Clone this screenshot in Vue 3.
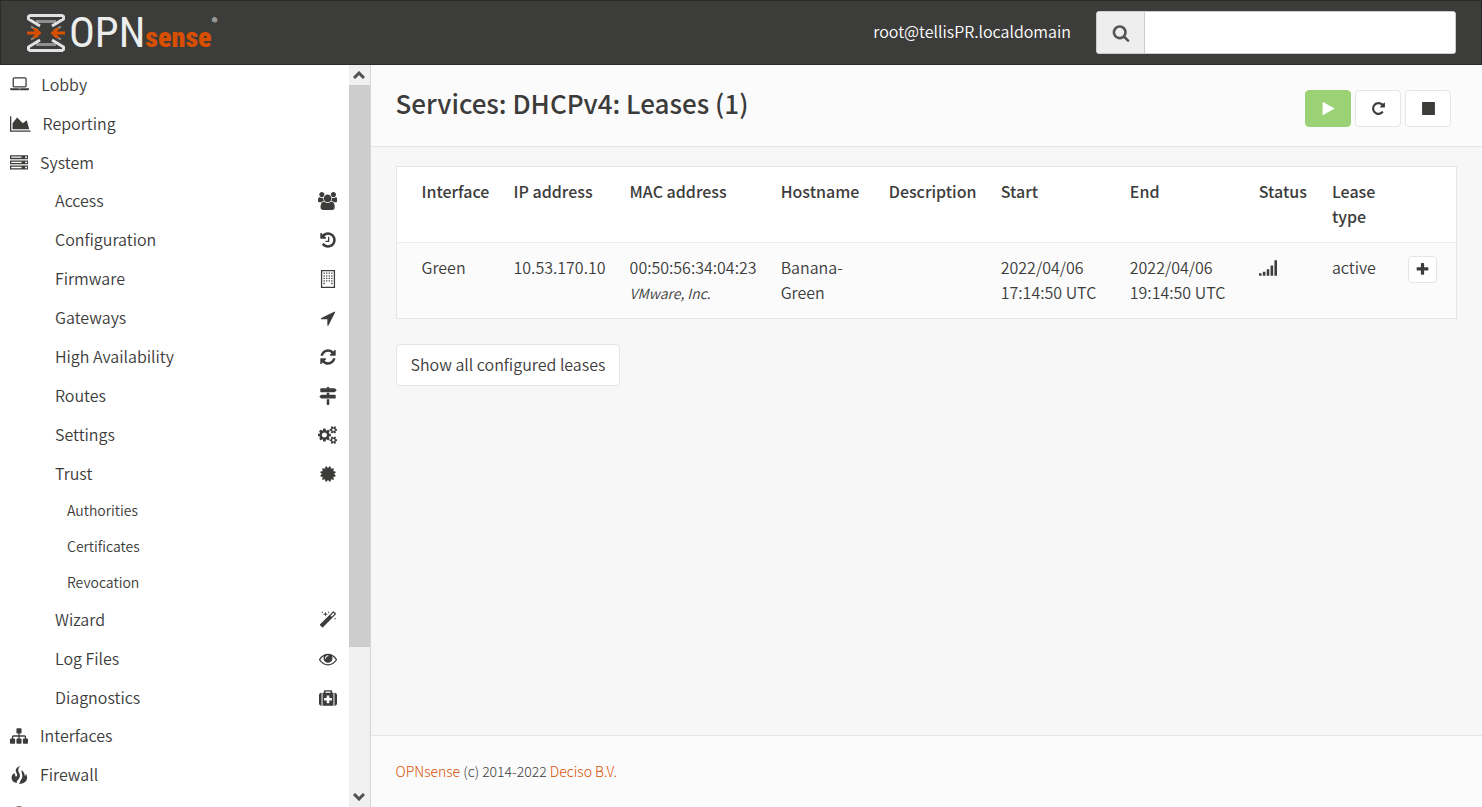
<script setup>
import { ref } from 'vue'

const search = ref('')

const icons = {
  laptop: { w: 1920, d: 'M416 1152q-66 0-113-47t-47-113v-704q0-66 47-113t113-47h1088q66 0 113 47t47 113v704q0 66-47 113t-113 47h-1088zm-32-864v704q0 13 9.500 22.500t22.500 9.500h1088q13 0 22.500-9.500t9.500-22.500v-704q0-13-9.500-22.500t-22.500-9.500h-1088q-13 0-22.500 9.500t-9.500 22.500zm1376 928h160v96q0 40-47 68t-113 28h-1600q-66 0-113-28t-47-68v-96h1760zm-720 96q16 0 16-16t-16-16h-160q-16 0-16 16t16 16h160z' },
  chart: { w: 2048, d: 'M2048 1536v128h-2048v-1536h128v1408h1920zm-384-1024l256 896h-1664v-576l448-576 576 576z' },
  server: { w: 1792, d: 'M128 1408h1024v-128h-1024v128zm0-512h1024v-128h-1024v128zm1568 448q0-40-28-68t-68-28-68 28-28 68 28 68 68 28 68-28 28-68zm-1568-960h1024v-128h-1024v128zm1568 448q0-40-28-68t-68-28-68 28-28 68 28 68 68 28 68-28 28-68zm0-512q0-40-28-68t-68-28-68 28-28 68 28 68 68 28 68-28 28-68zm96 832v384h-1792v-384h1792zm0-512v384h-1792v-384h1792zm0-512v384h-1792v-384h1792z' },
  users: { w: 1920, d: 'M593 896q-162 5-265 128h-134q-82 0-138-40.500t-56-118.500q0-353 124-353 6 0 43.500 21t97.500 42.500 119 21.500q67 0 133-23-5 37-5 66 0 139 81 256zm1071 637q0 120-73 189.500t-194 69.500h-874q-121 0-194-69.500t-73-189.500q0-53 3.500-103.500t14-109 26.500-108.500 43-97.500 62-81 85.500-53.500 111.500-20q10 0 43 21.500t73 48 107 48 135 21.500 135-21.500 107-48 73-48 43-21.500q61 0 111.500 20t85.500 53.500 62 81 43 97.500 26.500 108.500 14 109 3.500 103.500zm-1024-1277q0 106-75 181t-181 75-181-75-75-181 75-181 181-75 181 75 75 181zm704 384q0 159-112.500 271.500t-271.500 112.500-271.500-112.500-112.500-271.500 112.500-271.500 271.500-112.500 271.500 112.500 112.500 271.500zm576 225q0 78-56 118.500t-138 40.500h-134q-103-123-265-128 81-117 81-256 0-29-5-66 66 23 133 23 59 0 119-21.500t97.500-42.500 43.500-21q124 0 124 353zm-128-609q0 106-75 181t-181 75-181-75-75-181 75-181 181-75 181 75 75 181z' },
  history: { w: 1792, d: 'M1664 896q0 156-61 298t-164 245-245 164-298 61q-172 0-327-72.500t-264-204.500q-7-10-6.500-22.500t8.500-20.500l137-138q10-9 25-9 16 2 23 12 73 95 179 147t225 52q104 0 198.500-40.500t163.500-109.500 109.500-163.500 40.500-198.500-40.500-198.500-109.500-163.500-163.500-109.500-198.500-40.500q-98 0-188 35.500t-160 101.500l137 138q31 30 14 69-17 40-59 40h-448q-26 0-45-19t-19-45v-448q0-42 40-59 39-17 69 14l130 129q107-101 244.500-156.500t284.500-55.500q156 0 298 61t245 164 164 245 61 298zm-640-288v448q0 14-9 23t-23 9h-320q-14 0-23-9t-9-23v-64q0-14 9-23t23-9h224v-352q0-14 9-23t23-9h64q14 0 23 9t9 23z' },
  building: { w: 1792, d: 'M192 0h1408v1792h-1408zM320 128v1536h384v-256h384v256h384v-1536zM448 256h128v128h-128zm256 0h128v128h-128zm256 0h128v128h-128zm256 0h128v128h-128zM448 512h128v128h-128zm256 0h128v128h-128zm256 0h128v128h-128zm256 0h128v128h-128zM448 768h128v128h-128zm256 0h128v128h-128zm256 0h128v128h-128zm256 0h128v128h-128zM448 1024h128v128h-128zm256 0h128v128h-128zm256 0h128v128h-128zm256 0h128v128h-128zM448 1280h128v128h-128zm768 0h128v128h-128zM704 1408h384v256h-384z' },
  arrow: { w: 1792, d: 'M1593 349l-640 1280q-17 35-57 35-5 0-15-2-22-5-35.500-22.500t-13.500-39.500v-576h-576q-22 0-39.500-13.500t-22.500-35.500 4-42 29-30l1280-640q13-7 29-7 27 0 45 19 15 14 18.500 34.500t-6.500 39.500z' },
  refresh: { w: 1792, d: 'M1639 1056q0 5-1 7-64 268-268 434.500t-478 166.500q-146 0-282.500-55t-243.500-157l-129 129q-19 19-45 19t-45-19-19-45v-448q0-26 19-45t45-19h448q26 0 45 19t19 45-19 45l-137 137q71 66 161 102t187 36q134 0 250-65t186-179q11-17 53-117 8-23 30-23h192q13 0 22.500 9.500t9.500 22.500zm25-800v448q0 26-19 45t-45 19h-448q-26 0-45-19t-19-45 19-45l138-138q-148-137-349-137-134 0-250 65t-186 179q-11 17-53 117-8 23-30 23h-199q-13 0-22.500-9.500t-9.500-22.500v-7q65-268 270-434.500t480-166.500q146 0 284 55.500t245 156.500l130-129q19-19 45-19t45 19 19 45z' },
  signs: { w: 1792, d: 'M1745 297q10 10 10 23t-10 23l-141 141q-28 28-68 28h-1344q-26 0-45-19t-19-45v-256q0-26 19-45t45-19h576v-64q0-26 19-45t45-19h128q26 0 45 19t19 45v64h512q40 0 68 28zm-977 919h256v512q0 26-19 45t-45 19h-128q-26 0-45-19t-19-45v-512zm832-448q26 0 45 19t19 45v256q0 26-19 45t-45 19h-1344q-40 0-68-28l-141-141q-10-10-10-23t10-23l141-141q28-28 68-28h512v-192h256v192h576z' },
  cogs: { w: 1920, d: 'M896 896q0-106-75-181t-181-75-181 75-75 181 75 181 181 75 181-75 75-181zm768 512q0-52-38-90t-90-38-90 38-38 90q0 53 37.500 90.500t90.500 37.500 90.500-37.500 37.500-90.500zm0-1024q0-52-38-90t-90-38-90 38-38 90q0 53 37.500 90.500t90.500 37.500 90.500-37.500 37.500-90.500zm-384 421v185q0 10-7 19.500t-16 10.500l-155 24q-11 35-32 76 34 48 90 115 7 11 7 20 0 12-7 19-23 30-82.500 89.500t-78.500 59.500q-11 0-21-7l-115-90q-37 19-77 31-11 108-23 155-7 24-30 24h-186q-11 0-20-7.500t-10-17.500l-23-153q-34-10-75-31l-118 89q-7 7-20 7-11 0-21-8-144-133-144-160 0-9 7-19 10-14 41-53t47-61q-23-44-35-82l-152-24q-10-1-17-9.500t-7-19.500v-185q0-10 7-19.500t16-10.500l155-24q11-35 32-76-34-48-90-115-7-11-7-20 0-12 7-20 22-30 82-89t79-59q11 0 21 7l115 90q34-18 77-32 11-108 23-154 7-24 30-24h186q11 0 20 7.500t10 17.500l23 153q34 10 75 31l118-89q8-7 20-7 11 0 21 8 144 133 144 160 0 8-7 19-12 16-42 54t-45 60q23 48 34 82l152 23q10 2 17 10.500t7 19.500zm640 533v140q0 16-149 31-12 27-30 52 51 113 51 138 0 4-4 7-122 71-124 71-8 0-46-47t-52-68q-20 2-30 2t-30-2q-14 21-52 68t-46 47q-2 0-124-71-4-3-4-7 0-25 51-138-18-25-30-52-149-15-149-31v-140q0-16 149-31 13-29 30-52-51-113-51-138 0-4 4-7 4-2 35-20t59-34 30-16q8 0 46 46.500t52 67.500q20-2 30-2t30 2q51-71 92-112l6-2q4 0 124 70 4 3 4 7 0 25-51 138 17 23 30 52 149 15 149 31zm0-1024v140q0 16-149 31-12 27-30 52 51 113 51 138 0 4-4 7-122 71-124 71-8 0-46-47t-52-68q-20 2-30 2t-30-2q-14 21-52 68t-46 47q-2 0-124-71-4-3-4-7 0-25 51-138-18-25-30-52-149-15-149-31v-140q0-16 149-31 13-29 30-52-51-113-51-138 0-4 4-7 4-2 35-20t59-34 30-16q8 0 46 46.500t52 67.500q20-2 30-2t30 2q51-71 92-112l6-2q4 0 124 70 4 3 4 7 0 25-51 138 17 23 30 52 149 15 149 31z' },
  certificate: { w: 1792, d: 'M1504 896l138 135q30 28 20 70-12 41-52 51l-188 48 53 186q12 41-19 70-29 31-70 19l-186-53-48 188q-10 40-51 52-12 2-19 2-31 0-51-22l-135-138-135 138q-28 30-70 20-41-11-51-52l-48-188-186 53q-41 12-70-19-31-29-19-70l53-186-188-48q-40-10-52-51-10-42 20-70l138-135-138-135q-30-28-20-70 12-41 52-51l188-48-53-186q-12-41 19-70 29-31 70-19l186 53 48-188q10-41 51-51 41-12 70 19l135 139 135-139q29-30 70-19 41 10 51 51l48 188 186-53q41-12 70 19 31 29 19 70l-53 186 188 48q40 10 52 51 10 42-20 70z' },
  magic: { w: 1792, d: 'M1254 581l293-293-107-107-293 293zm447-293q0 27-18 45l-1286 1286q-18 18-45 18t-45-18l-198-198q-18-18-18-45t18-45l1286-1286q18-18 45-18t45 18l198 198q18 18 18 45zm-1351-190l98 30-98 30-30 98-30-98-98-30 98-30 30-98zm350 162l196 60-196 60-60 196-60-196-196-60 196-60 60-196zm930 478l98 30-98 30-30 98-30-98-98-30 98-30 30-98zm-640-640l98 30-98 30-30 98-30-98-98-30 98-30 30-98z' },
  eye: { w: 1792, d: 'M1664 960q-152-236-381-353 61 104 61 225 0 185-131.500 316.500t-316.500 131.500-316.500-131.500-131.500-316.500q0-121 61-225-229 117-381 353 133 205 333.500 326.500t434.500 121.500 434.500-121.500 333.500-326.500zm-720-384q0-20-14-34t-34-14q-125 0-214.500 89.500t-89.500 214.500q0 20 14 34t34 14 34-14 14-34q0-86 61-147t147-61q20 0 34-14t14-34zm848 384q0 34-20 69-140 230-376.500 368.500t-499.500 138.500-499.500-139-376.500-368q-20-35-20-69t20-69q140-229 376.500-368t499.500-139 499.500 139 376.500 368q20 35 20 69z' },
  medkit: { w: 1792, d: 'M1280 1120v-192q0-14-9-23t-23-9h-224v-224q0-14-9-23t-23-9h-192q-14 0-23 9t-9 23v224h-224q-14 0-23 9t-9 23v192q0 14 9 23t23 9h224v224q0 14 9 23t23 9h192q14 0 23-9t9-23v-224h224q14 0 23-9t9-23zm-640-736h512v-128h-512v128zm-384 0v1280h-32q-92 0-158-66t-66-158v-832q0-92 66-158t158-66h32zm1184 0v1280h-1088v-1280h128v-160q0-40 28-68t68-28h640q40 0 68 28t28 68v160h128zm352 224v832q0 92-66 158t-158 66h-32v-1280h32q92 0 158 66t66 158z' },
  sitemap: { w: 1792, d: 'M1792 1248v320q0 40-28 68t-68 28h-320q-40 0-68-28t-28-68v-320q0-40 28-68t68-28h96v-192h-512v192h96q40 0 68 28t28 68v320q0 40-28 68t-68 28h-320q-40 0-68-28t-28-68v-320q0-40 28-68t68-28h96v-192h-512v192h96q40 0 68 28t28 68v320q0 40-28 68t-68 28h-320q-40 0-68-28t-28-68v-320q0-40 28-68t68-28h96v-192q0-52 38-90t90-38h512v-192h-96q-40 0-68-28t-28-68v-320q0-40 28-68t68-28h320q40 0 68 28t28 68v320q0 40-28 68t-68 28h-96v192h512q52 0 90 38t38 90v192h96q40 0 68 28t28 68z' },
  fire: { w: 1792, d: 'M1000 0C620 140 500 380 620 640C720 820 740 980 640 1040C540 1070 500 960 530 860C480 860 440 800 450 700C240 820 130 1020 160 1240C190 1480 420 1680 700 1690C640 1560 700 1480 800 1360C1000 1160 1060 900 900 660C760 440 820 200 1000 0zM1160 400C1120 620 1200 760 1230 960C1260 1240 1080 1300 1040 1480C1020 1600 960 1700 880 1792C1360 1760 1680 1560 1700 1220C1710 1020 1660 880 1560 780C1580 900 1540 980 1470 1000C1480 760 1340 540 1160 400z' },
  globe: { w: 1792, d: 'M896 128a768 768 0 1 0 0 1536a768 768 0 1 0 0-1536z' },
  search: { w: 1792, d: 'M1216 832q0-185-131.500-316.500t-316.500-131.500-316.500 131.500-131.500 316.500 131.500 316.500 316.500 131.500 316.500-131.500 131.500-316.500zm512 832q0 52-38 90t-90 38q-54 0-90-38l-343-342q-179 124-399 124-143 0-273.500-55.500t-225-150-150-225-55.500-273.500 55.500-273.500 150-225 225-150 273.500-55.500 273.500 55.500 225 150 150 225 55.500 273.500q0 220-124 399l343 343q37 37 37 90z' },
  play: { w: 1792, d: 'M1576 927l-1328 738q-23 13-39.500 3t-16.500-36v-1472q0-26 16.500-36t39.500 3l1328 738q23 13 23 31t-23 31z' },
  repeat: { w: 1792, d: 'M1664 256v448q0 26-19 45t-45 19h-448q-42 0-59-40-17-39 14-69l138-138q-148-137-349-137-104 0-198.500 40.500t-163.500 109.500-109.500 163.500-40.500 198.500 40.500 198.500 109.500 163.500 163.500 109.500 198.500 40.500q119 0 225-52t179-147q7-10 23-12 15 0 25 9l137 138q9 8 9.500 20.500t-7.500 22.500q-109 132-264 204.500t-327 72.500q-156 0-298-61t-245-164-164-245-61-298 61-298 164-245 245-164 298-61q147 0 284.500 55.500t244.500 156.500l130-129q29-31 70-14 39 17 39 59z' },
  stop: { w: 1792, d: 'M1664 192v1408q0 26-19 45t-45 19h-1408q-26 0-45-19t-19-45v-1408q0-26 19-45t45-19h1408q26 0 45 19t19 45z' },
  signal: { w: 1792, d: 'M0 1408h256v256h-256zM384 1280h256v384h-256zM768 1024h256v640h-256zM1152 640h256v1024h-256zM1536 128h256v1536h-256z' },
  plus: { w: 1792, d: 'M1600 736v192q0 40-28 68t-68 28h-416v416q0 40-28 68t-68 28h-192q-40 0-68-28t-28-68v-416h-416q-40 0-68-28t-28-68v-192q0-40 28-68t68-28h416v-416q0-40 28-68t68-28h192q40 0 68 28t28 68v416h416q40 0 68 28t28 68z' }
}

const menu = [
  { name: 'Lobby', icon: 'laptop' },
  { name: 'Reporting', icon: 'chart' },
  {
    name: 'System',
    icon: 'server',
    items: [
      { name: 'Access', icon: 'users' },
      { name: 'Configuration', icon: 'history' },
      { name: 'Firmware', icon: 'building' },
      { name: 'Gateways', icon: 'arrow' },
      { name: 'High Availability', icon: 'refresh' },
      { name: 'Routes', icon: 'signs' },
      { name: 'Settings', icon: 'cogs' },
      { name: 'Trust', icon: 'certificate', items: ['Authorities', 'Certificates', 'Revocation'] },
      { name: 'Wizard', icon: 'magic' },
      { name: 'Log Files', icon: 'eye' },
      { name: 'Diagnostics', icon: 'medkit' }
    ]
  },
  { name: 'Interfaces', icon: 'sitemap' },
  { name: 'Firewall', icon: 'fire' },
  { name: '', icon: 'globe' }
]

const columns = ['Interface', 'IP address', 'MAC address', 'Hostname', 'Description', 'Start', 'End', 'Status', 'Lease type']

const leases = [
  {
    iface: 'Green',
    ip: '10.53.170.10',
    mac: '00:50:56:34:04:23',
    vendor: 'VMware, Inc.',
    hostname: 'Banana-Green',
    descr: '',
    start: '2022/04/06 17:14:50 UTC',
    end: '2022/04/06 19:14:50 UTC',
    type: 'active'
  }
]

const controls = [
  { name: 'Start', icon: 'play', cls: 'btn-success' },
  { name: 'Restart', icon: 'repeat', cls: '' },
  { name: 'Stop', icon: 'stop', cls: '' }
]

const box = (name) => `0 0 ${icons[name].w} 1792`
</script>

<template>
  <div class="page">
    <header class="navbar">
      <a href="#" class="brand">
        <svg class="brand-mark" viewBox="0 0 38 38" aria-hidden="true">
          <g fill="none" stroke-linejoin="round">
            <path d="M9 7.500h20M9 30.500h20" stroke="#8f9190" stroke-width="3" />
            <path d="M4 12.500l7 4M34 12.500l-7 4M4 25.500l7-4M34 25.500l-7-4" stroke="#8f9190" stroke-width="2" />
            <path d="M13 12L1.500 5V2.500l1.500-1h32l1.500 1V5L25 12" stroke="#dfe1e2" stroke-width="3" />
            <path d="M13 26L1.500 33v2.500l1.500 1h32l1.500-1V33L25 26" stroke="#dfe1e2" stroke-width="3" />
          </g>
          <path d="M0 17.500h8L5 14h4l5.500 5L9 24H5l3-3.500H0zM38 17.500h-8l3-3.500h-4l-5.500 5 5.500 5h4l-3-3.500h8z" fill="#d94f00" />
        </svg>
        <span class="brand-name">OPN<b>sense</b></span>
        <span class="brand-reg">®</span>
      </a>
      <div class="nav-right">
        <span class="user">root@tellisPR.localdomain</span>
        <form class="search" @submit.prevent>
          <label for="menu-search" class="search-addon" aria-label="Search">
            <svg class="icon" :viewBox="box('search')"><path :d="icons.search.d" /></svg>
          </label>
          <input id="menu-search" v-model="search" type="text" />
        </form>
      </div>
    </header>

    <div class="body">
      <aside class="sidebar">
        <nav class="menu">
          <ul>
            <li v-for="group in menu" :key="group.icon">
              <a href="#" class="item">
                <svg class="icon" :viewBox="box(group.icon)"><path fill-rule="evenodd" :d="icons[group.icon].d" /></svg>
                {{ group.name }}
              </a>
              <ul v-if="group.items" class="submenu">
                <li v-for="item in group.items" :key="item.name">
                  <a href="#" class="item subitem">
                    {{ item.name }}
                    <span class="subicon">
                      <svg class="icon" :viewBox="box(item.icon)"><path :d="icons[item.icon].d" fill-rule="evenodd" /></svg>
                    </span>
                  </a>
                  <ul v-if="item.items" class="leafmenu">
                    <li v-for="leaf in item.items" :key="leaf">
                      <a href="#" class="item leaf">{{ leaf }}</a>
                    </li>
                  </ul>
                </li>
              </ul>
            </li>
          </ul>
        </nav>
        <div class="scrollbar">
          <button type="button" class="scroll-btn" aria-label="Scroll up">
            <svg viewBox="0 0 12 8"><path d="M1 7l5-5 5 5" /></svg>
          </button>
          <div class="track"><div class="thumb"></div></div>
          <button type="button" class="scroll-btn" aria-label="Scroll down">
            <svg viewBox="0 0 12 8"><path d="M1 1l5 5 5-5" /></svg>
          </button>
        </div>
      </aside>

      <div class="main">
        <div class="page-head">
          <h1>Services: DHCPv4: Leases (1)</h1>
          <div class="controls">
            <button v-for="c in controls" :key="c.name" type="button" class="btn btn-control" :class="c.cls" :aria-label="c.name">
              <svg class="icon icon-sm" :viewBox="box(c.icon)"><path :d="icons[c.icon].d" /></svg>
            </button>
          </div>
        </div>

        <main class="content">
          <table class="leases">
            <colgroup>
              <col class="c-iface" />
              <col class="c-ip" />
              <col class="c-mac" />
              <col class="c-host" />
              <col class="c-descr" />
              <col class="c-time" />
              <col class="c-time" />
              <col class="c-status" />
              <col class="c-type" />
              <col class="c-action" />
            </colgroup>
            <thead>
              <tr>
                <th v-for="col in columns" :key="col">{{ col }}</th>
                <th></th>
              </tr>
            </thead>
            <tbody>
              <tr v-for="lease in leases" :key="lease.mac">
                <td>{{ lease.iface }}</td>
                <td>{{ lease.ip }}</td>
                <td>{{ lease.mac }}<br /><small><i>{{ lease.vendor }}</i></small></td>
                <td>{{ lease.hostname }}</td>
                <td>{{ lease.descr }}</td>
                <td>{{ lease.start }}</td>
                <td>{{ lease.end }}</td>
                <td><svg class="icon signal" :viewBox="box('signal')"><path :d="icons.signal.d" /></svg></td>
                <td>{{ lease.type }}</td>
                <td>
                  <button type="button" class="btn btn-add" aria-label="Add static mapping">
                    <svg class="icon icon-sm" :viewBox="box('plus')"><path :d="icons.plus.d" /></svg>
                  </button>
                </td>
              </tr>
            </tbody>
          </table>
          <button type="button" class="btn btn-show">Show all configured leases</button>
        </main>

        <footer class="footer">
          <a href="#">OPNsense</a> (c) 2014-2022 <a href="#">Deciso B.V.</a>
        </footer>
      </div>
    </div>
  </div>
</template>

<style>
body {
  overflow: hidden;
}
</style>

<style scoped>
.page {
  display: flex;
  flex-direction: column;
  height: 100vh;
  font-family: "Noto Sans CJK SC", "Noto Sans", sans-serif;
  font-size: 16px;
  font-weight: 350;
  line-height: 25px;
  color: #3c3c3b;
  background: #f7f7f7;
}

.page *,
.page {
  box-sizing: border-box;
}

ul {
  list-style: none;
  margin: 0;
  padding: 0;
}

a {
  text-decoration: none;
}

button,
input {
  font: inherit;
  color: inherit;
}

.icon {
  display: block;
  height: 18px;
  fill: currentColor;
}

.icon-sm {
  height: 15px;
}

/* top bar */
.navbar {
  display: flex;
  flex: none;
  align-items: center;
  justify-content: space-between;
  height: 65px;
  padding: 0 25px 0 26px;
  background: #3c3c3b;
  border: 1px solid #2b2b2a;
}

.brand {
  display: flex;
  align-items: center;
  color: #eceeed;
}

.brand-mark {
  width: 38px;
  height: 38px;
  margin-right: 4px;
}

.brand-name {
  padding-top: 5px;
  font-family: "Roboto Condensed", "Liberation Sans Narrow", sans-serif;
  font-size: 43px;
  font-weight: 400;
  line-height: 46px;
}

.brand-name b {
  font-size: 28px;
  font-weight: 900;
  color: #d94f00;
}

.brand-reg {
  align-self: flex-start;
  padding-top: 8px;
  font-size: 12px;
  line-height: 20px;
}

.nav-right {
  display: flex;
  align-items: center;
  gap: 25px;
}

.user {
  padding-bottom: 2px;
  color: #fff;
}

.search {
  display: flex;
  width: 360px;
  height: 43px;
  background: #fff;
  border: 1px solid #ccc;
  border-radius: 3px;
  overflow: hidden;
}

.search-addon {
  display: flex;
  align-items: center;
  justify-content: center;
  width: 48px;
  background: #eee;
  border-right: 1px solid #ccc;
  color: #555;
}

.search input {
  flex: 1;
  min-width: 0;
  padding: 0 15px;
  border: 0;
  outline: 0;
}

.body {
  display: flex;
  flex: 1;
  min-height: 0;
}

/* sidebar */
.sidebar {
  display: flex;
  width: 25%;
  background: #fff;
  border-right: 1px solid #d6d6d6;
}

.menu {
  flex: 1;
  overflow: hidden;
}

.item {
  display: flex;
  align-items: center;
  gap: 12px;
  height: 39px;
  padding: 0 10px;
  color: #3c3c3b;
}

.submenu {
  margin: -1px 0;
}

.subitem {
  justify-content: space-between;
  padding: 0 9px 0 55px;
}

.subicon {
  display: flex;
  justify-content: center;
  width: 24px;
}

.leafmenu {
  margin-top: -1px;
}

.leaf {
  height: 36px;
  padding-left: 67px;
  font-size: 14px;
}

.scrollbar {
  display: flex;
  flex-direction: column;
  width: 21px;
  background: #f0f0f0;
}

.scroll-btn {
  display: flex;
  align-items: center;
  justify-content: center;
  height: 20px;
  padding: 0;
  border: 0;
  background: #f0f0f0;
}

.scroll-btn svg {
  width: 12px;
  height: 8px;
  fill: none;
  stroke: #505050;
  stroke-width: 3;
}

.track {
  flex: 1;
}

.thumb {
  height: 80%;
  background: #cdcdcd;
}

/* content */
.main {
  display: flex;
  flex: 1;
  flex-direction: column;
  min-width: 0;
}

.page-head {
  display: flex;
  justify-content: space-between;
  padding: 25px 31px 19px 25px;
  background: #fbfbfb;
  border-bottom: 1px solid #e5e5e5;
}

h1 {
  margin: 0;
  font-size: 26px;
  font-weight: 500;
  line-height: 26px;
}

.controls {
  display: flex;
  gap: 4px;
}

.btn {
  display: flex;
  align-items: center;
  justify-content: center;
  padding: 0;
  background: #fff;
  border: 1px solid #e5e5e5;
  border-radius: 4px;
}

.btn-control {
  width: 46px;
  height: 37px;
}

.btn-success {
  color: #fff;
  background: #9bd275;
  border-color: #9bd275;
}

.content {
  flex: 1;
  padding: 19px 25px;
}

.leases {
  width: 100%;
  table-layout: fixed;
  border-collapse: separate;
  border-spacing: 0;
  background: #fff;
  border: 1px solid #e5e5e5;
}

.c-iface { width: 105px; }
.c-ip { width: 116px; }
.c-mac { width: 151px; }
.c-host { width: 108px; }
.c-descr { width: 112px; }
.c-time { width: 129px; }
.c-status { width: 73px; }
.c-type { width: 76px; }
.c-action { width: 60px; }

th,
td {
  padding: 12px;
  text-align: left;
  vertical-align: top;
}

th {
  padding-bottom: 13px;
  font-weight: 500;
}

td {
  background: #fbfbfb;
  border-top: 1px solid #ebebeb;
}

th:first-child,
td:first-child {
  padding-left: 25px;
}

small {
  font-size: 14px;
}

.signal {
  margin-top: 4px;
}

.btn-add {
  width: 29px;
  height: 27px;
  margin-top: 1px;
}

.btn-show {
  height: 42px;
  margin-top: 25px;
  padding: 0 14px 2px;
}

.footer {
  padding: 23px 25px;
  font-size: 14px;
  font-weight: 300;
  background: #fbfbfb;
  border-top: 1px solid #e5e5e5;
}

.footer a {
  color: #d94f00;
}
</style>
